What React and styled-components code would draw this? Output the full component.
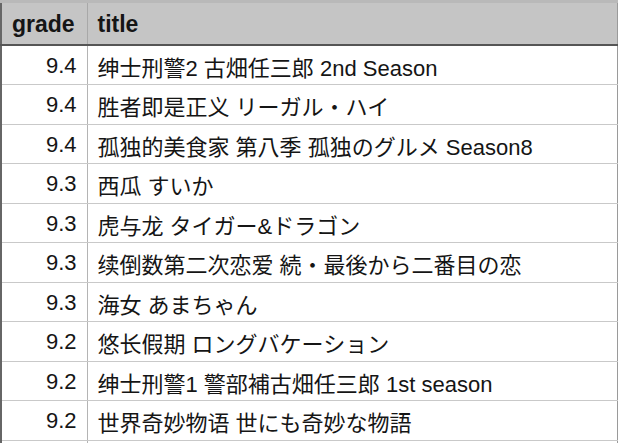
import styled, { createGlobalStyle } from 'styled-components';

const rows = [
    ['9.4', '绅士刑警2 古畑任三郎 2nd Season'],
    ['9.4', '胜者即是正义 リーガル・ハイ'],
    ['9.4', '孤独的美食家 第八季 孤独のグルメ Season8'],
    ['9.3', '西瓜 すいか'],
    ['9.3', '虎与龙 タイガー&ドラゴン'],
    ['9.3', '续倒数第二次恋爱 続・最後から二番目の恋'],
    ['9.3', '海女 あまちゃん'],
    ['9.2', '悠长假期 ロングバケーション'],
    ['9.2', '绅士刑警1 警部補古畑任三郎 1st season'],
    ['9.2', '世界奇妙物语 世にも奇妙な物語'],
    ['', ''],
];

const App = () => {
    return (
        <>
            <GlobalStyle/>
            <Table>
                <colgroup>
                    <col style={{width: 86}}/>
                    <col/>
                </colgroup>
                <thead>
                    <tr>
                        <HeadCell>grade</HeadCell>
                        <HeadCell>title</HeadCell>
                    </tr>
                </thead>
                <tbody>
                    {rows.map((row, i) => (
                        <Row key={i}>
                            <Cell $num>{row[0]}</Cell>
                            <Cell>{row[1]}</Cell>
                        </Row>
                    ))}
                </tbody>
            </Table>
        </>
    )
};

export default App;

const GlobalStyle = createGlobalStyle`
    body {
        margin: 0;
        background: #fff;
        font-family: "Liberation Sans", "Noto Sans CJK JP", sans-serif;
        overflow: hidden;
    }
`;

const Table = styled.table`
    width: 618px;
    table-layout: fixed;
    border-collapse: collapse;
    border-top: 3px solid #b9b9b9;
    border-left: 2px solid #666;
    border-right: 1px solid #9a9a9a;
    color: #151515;
    font-size: 22px;
`;

const HeadCell = styled.th`
    height: 39px;
    padding: 2px 10px 0;
    background: #c5c5c5;
    text-align: left;
    font-weight: bold;
    font-size: 23px;
    border-bottom: 2px solid #555;
    border-right: 1px solid #a8a8a8;
    &:last-child { border-right: none; }
`;

const Row = styled.tr`
    height: 39.5px;
`;

const Cell = styled.td`
    padding: 2px ${p => p.$num ? '10px' : '10px'} 0;
    text-align: ${p => p.$num ? 'right' : 'left'};
    border-bottom: 1px solid #c9c9c9;
    border-right: ${p => p.$num ? '1px solid #b4b4b4' : 'none'};
    white-space: nowrap;
    overflow: hidden;
`;
